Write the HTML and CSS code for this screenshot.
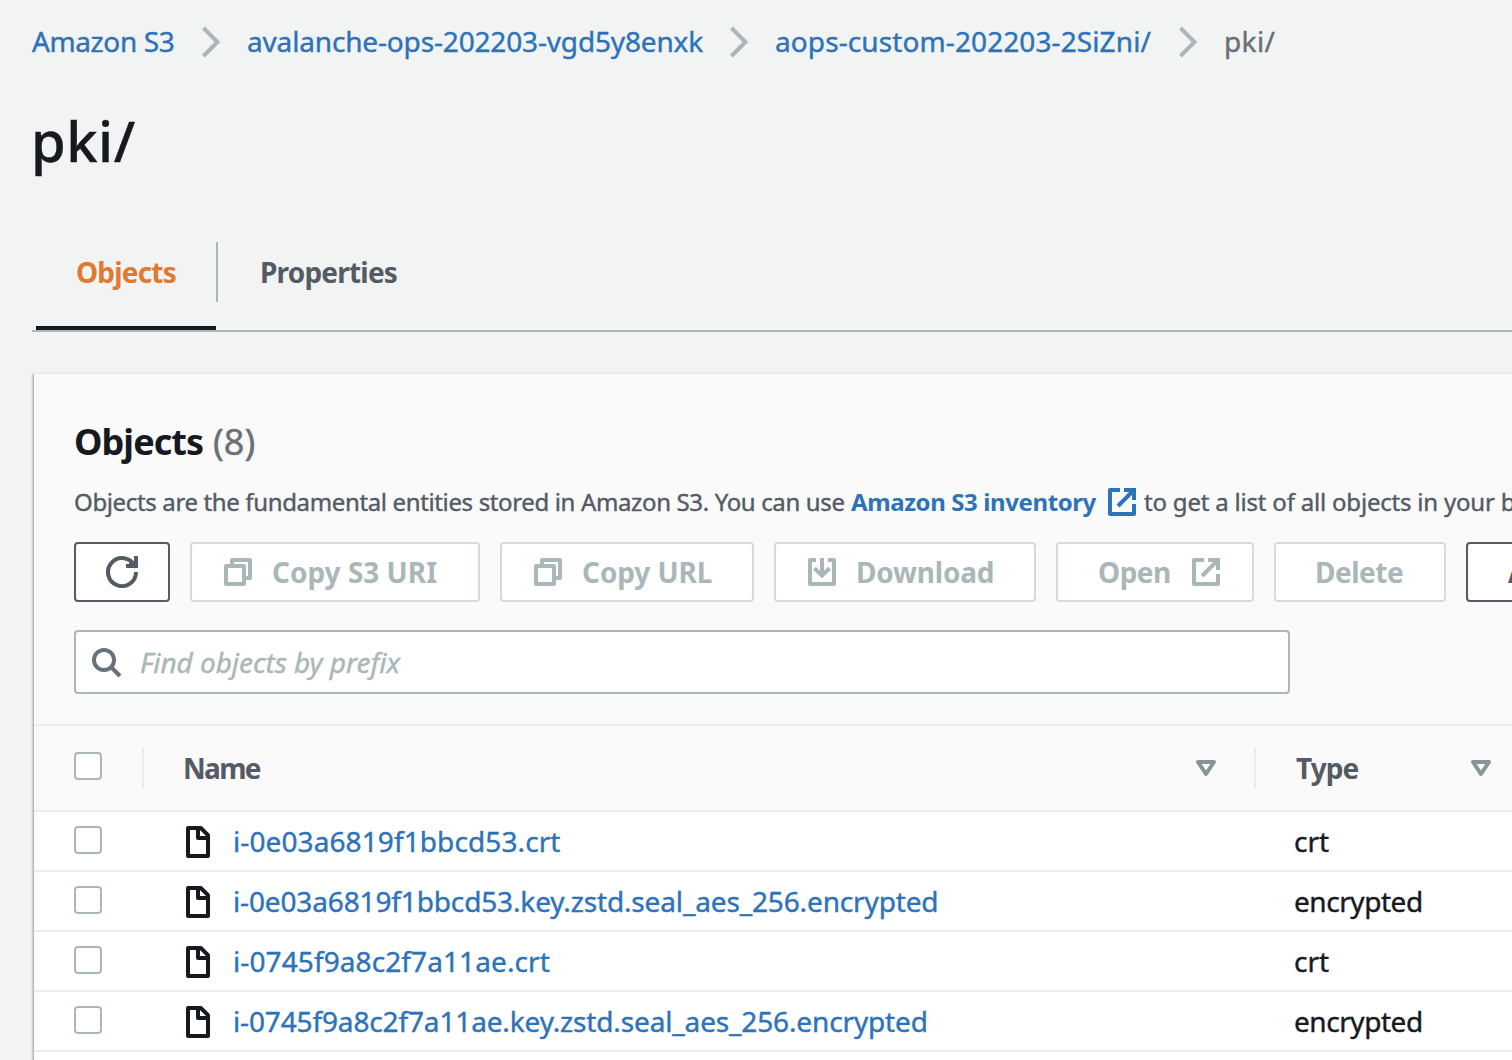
FILE: index.html
```html
<!DOCTYPE html>
<html lang="en">
<head>
<meta charset="utf-8">
<title>pki/ - Amazon S3</title>
<link rel="stylesheet" href="styles.css">
</head>
<body>
<svg class="sprite" aria-hidden="true">
  <symbol id="chevron" viewBox="0 0 20 32"><path d="M2.500 2l14 14-14 14"/></symbol>
  <symbol id="refresh" viewBox="0 0 16 16"><path d="M10 5h5V0M12 3l3 2.500"/><path d="M15 8a7 7 0 1 1-.7-3"/></symbol>
  <symbol id="copy" viewBox="0 0 16 16"><path class="round" d="M2 5h9v9H2z"/><path class="round" d="M5 5V2h9v9h-3"/></symbol>
  <symbol id="download" viewBox="0 0 16 16"><path class="round" d="M11 2h3v12H2V2h3"/><path d="M8 1v8.500M4.200 6.100L8 9.700l3.800-3.600"/></symbol>
  <symbol id="external" viewBox="0 0 16 16"><path d="M9 2h5v5M6 10l8-8"/><path class="round" d="M14 9v5H2V2h5"/></symbol>
  <symbol id="search" viewBox="0 0 16 16"><circle cx="7" cy="7" r="5"/><path d="M15 15l-4.500-4.500"/></symbol>
  <symbol id="file" viewBox="0 0 16 16"><path class="round" d="M3 1h6.400L13 4.600V15H3z"/><path class="round" d="M8 1v5h5"/></symbol>
  <symbol id="sort" viewBox="0 0 16 16"><path class="round" d="M4 5h8l-4 6z"/></symbol>
</svg>

<nav class="breadcrumbs">
  <a class="crumb crumb-root">Amazon S3</a>
  <svg class="chevron"><use href="#chevron"/></svg>
  <a class="crumb crumb-bucket">avalanche-ops-202203-vgd5y8enxk</a>
  <svg class="chevron"><use href="#chevron"/></svg>
  <a class="crumb crumb-folder">aops-custom-202203-2SiZni/</a>
  <svg class="chevron"><use href="#chevron"/></svg>
  <span class="crumb crumb-current">pki/</span>
</nav>

<h1 class="title">pki/</h1>

<div class="tabs">
  <div class="tab tab-active"><span class="tab-label">Objects</span></div>
  <div class="tab"><span class="tab-label">Properties</span></div>
</div>

<section class="card">
  <header class="card-header">
    <h2 class="heading"><span class="heading-text">Objects</span><span class="count">(8)</span></h2>
    <p class="description"><span class="desc-lead">Objects are the fundamental entities stored in Amazon S3. You can use</span><a class="inventory">Amazon S3 inventory</a><svg class="icon link-icon"><use href="#external"/></svg><span class="desc-tail">to get a list of all objects in your bucket.</span></p>
    <div class="actions">
      <button class="btn btn-enabled btn-refresh" aria-label="Refresh"><svg class="icon"><use href="#refresh"/></svg></button>
      <button class="btn btn-uri"><svg class="icon"><use href="#copy"/></svg><span>Copy S3 URI</span></button>
      <button class="btn btn-url"><svg class="icon"><use href="#copy"/></svg><span>Copy URL</span></button>
      <button class="btn btn-download"><svg class="icon"><use href="#download"/></svg><span>Download</span></button>
      <button class="btn btn-open"><span>Open</span><svg class="icon"><use href="#external"/></svg></button>
      <button class="btn btn-delete"><span>Delete</span></button>
      <button class="btn btn-enabled btn-actions"><span>Actions</span></button>
    </div>
    <div class="search">
      <svg class="icon"><use href="#search"/></svg>
      <span class="placeholder">Find objects by prefix</span>
    </div>
  </header>

  <div class="table">
    <div class="row row-head">
      <div class="cell cell-check"><span class="checkbox"></span></div>
      <div class="cell cell-name"><span class="label-name">Name</span><svg class="icon sort"><use href="#sort"/></svg></div>
      <div class="cell cell-type"><span class="label-type">Type</span><svg class="icon sort"><use href="#sort"/></svg></div>
    </div>
    <div class="row">
      <div class="cell cell-check"><span class="checkbox"></span></div>
      <div class="cell cell-name"><svg class="icon file"><use href="#file"/></svg><a class="short">i-0e03a6819f1bbcd53.crt</a></div>
      <div class="cell cell-type"><span>crt</span></div>
    </div>
    <div class="row">
      <div class="cell cell-check"><span class="checkbox"></span></div>
      <div class="cell cell-name"><svg class="icon file"><use href="#file"/></svg><a class="long">i-0e03a6819f1bbcd53.key.zstd.seal_aes_256.encrypted</a></div>
      <div class="cell cell-type"><span class="type-long">encrypted</span></div>
    </div>
    <div class="row">
      <div class="cell cell-check"><span class="checkbox"></span></div>
      <div class="cell cell-name"><svg class="icon file"><use href="#file"/></svg><a class="short">i-0745f9a8c2f7a11ae.crt</a></div>
      <div class="cell cell-type"><span>crt</span></div>
    </div>
    <div class="row">
      <div class="cell cell-check"><span class="checkbox"></span></div>
      <div class="cell cell-name"><svg class="icon file"><use href="#file"/></svg><a class="long">i-0745f9a8c2f7a11ae.key.zstd.seal_aes_256.encrypted</a></div>
      <div class="cell cell-type"><span class="type-long">encrypted</span></div>
    </div>
    <div class="row"></div>
  </div>
</section>
</body>
</html>
```
FILE: styles.css
```css
* { box-sizing: border-box; }

body {
  margin: 0;
  height: 1060px;
  overflow: hidden;
  padding: 21px 0 0 32px;
  background: #f2f4f3;
  color: #16191f;
  font: 28px/40px "Noto Sans", "Open Sans", sans-serif;
  -webkit-text-stroke: 0.4px currentColor;
  white-space: nowrap;
}

a { color: #2e73b8; }
svg { fill: none; stroke: currentColor; stroke-width: 2; flex: none; }
.sprite { display: none; }
.round { stroke-linejoin: round; }
.icon { width: 32px; height: 32px; display: block; }

.breadcrumbs { display: flex; height: 40px; }
.chevron {
  width: 20px;
  height: 32px;
  margin: 5px 27px 0 26px;
  color: #aab7b8;
  stroke-width: 4;
}
.crumb-root { width: 143px; letter-spacing: -0.4px; }
.crumb-bucket { width: 455px; letter-spacing: -0.16px; margin-left: -1px; margin-right: 1px; }
.crumb-folder { width: 376px; letter-spacing: 0.1px; margin-left: -1px; margin-right: 1px; }
.crumb-current { color: #687078; letter-spacing: 0.4px; margin-left: -1px; }

.title {
  margin: 44px 0 0 -1px;
  font-size: 56px;
  line-height: 70px;
  font-weight: 500;
  letter-spacing: 0.5px;
}

.tabs {
  display: flex;
  margin-top: 67px;
  height: 90px;
  padding-left: 4px;
  border-bottom: 2px solid #aab7b8;
  color: #545b64;
  font-weight: 700;
  -webkit-text-stroke: 0;
}
.tab { padding: 10px 40px 0 44px; letter-spacing: -0.8px; }
.tab-active {
  width: 180px;
  padding-left: 40px;
  border-bottom: 4px solid #16191f;
  color: #e07a31;
  position: relative;
}
.tab-active::after {
  content: "";
  position: absolute;
  left: 180px;
  top: 0;
  width: 2px;
  height: 60px;
  background: #aab7b8;
}

.card {
  margin: 40px 0 0 2px;
  height: 720px;
  border-top: 2px solid #eaeded;
  background: #fff;
  box-shadow: -2px 2px 2px 0 rgba(0, 28, 36, 0.2), 0 2px 2px 0 rgba(0, 28, 36, 0.3);
}
.card-header {
  height: 352px;
  padding: 43px 0 0 40px;
  border-bottom: 2px solid #eaeded;
  background: #fafafa;
}
.heading {
  display: flex;
  margin: 0;
  font-size: 36px;
  line-height: 50px;
}
.heading-text { width: 139px; letter-spacing: -0.94px; -webkit-text-stroke: 0; }
.count { color: #687078; font-weight: 400; }
.description {
  display: flex;
  margin: 18px 0 0;
  height: 34px;
  font-size: 24px;
  line-height: 34px;
  color: #545b64;
}
.description > * { flex: none; }
.desc-lead { width: 777px; letter-spacing: -0.36px; }
.inventory { width: 255px; font-weight: 700; letter-spacing: -0.4px; -webkit-text-stroke: 0; }
.link-icon { color: #2e73b8; margin-top: 1px; }
.desc-tail { margin-left: 6px; letter-spacing: -0.2px; }

.actions { display: flex; gap: 20px; margin-top: 23px; }
.btn {
  display: flex;
  align-items: center;
  flex: none;
  height: 60px;
  padding: 0 0 0 30px;
  border: 2px solid #d5dbdb;
  border-radius: 4px;
  background: #fff;
  color: #aab7b8;
  font: 700 28px/40px "Noto Sans", "Open Sans", sans-serif;
  -webkit-text-stroke: 0;
}
.btn .icon + span { margin-left: 18px; }
.btn-enabled { border-color: #545b64; color: #545b64; }
.btn-refresh { width: 96px; }
.btn-uri { width: 290px; }
.btn-url { width: 254px; letter-spacing: -0.1px; }
.btn-download { width: 262px; letter-spacing: -0.2px; }
.btn-open { width: 198px; padding-left: 40px; letter-spacing: -0.5px; }
.btn-open .icon { margin-left: 19px; }
.btn-delete { width: 172px; padding-left: 39px; letter-spacing: -0.48px; }
.btn-actions { width: 180px; padding-left: 40px; }

.search {
  display: flex;
  align-items: center;
  width: 1216px;
  height: 64px;
  margin-top: 28px;
  padding-left: 14px;
  border: 2px solid #aab7b8;
  border-radius: 4px;
  background: #fff;
  color: #687078;
}
.placeholder { margin-left: 18px; color: #aab7b8; font-style: italic; letter-spacing: -0.06px; }

.row {
  display: grid;
  grid-template-columns: 110px 1112px 1fr;
  height: 60px;
  border-bottom: 2px solid #eaeded;
}
.cell { display: flex; padding-left: 40px; }
.checkbox {
  width: 28px;
  height: 28px;
  margin-top: 14px;
  border: 2px solid #aab7b8;
  border-radius: 4px;
  background: #fff;
}
.row a, .row span:not(.checkbox) { padding-top: 9px; }
.cell-type { padding-left: 38px; }
.file { margin: 14px 19px 0 -2px; }
.short { letter-spacing: 0.1px; }
.long { letter-spacing: -0.14px; }
.type-long { letter-spacing: -0.45px; }

.row-head {
  height: 86px;
  background: #fafafa;
  color: #545b64;
  font-weight: 700;
  -webkit-text-stroke: 0;
}
.row-head .cell { align-items: center; }
.row-head .checkbox { margin-top: -4px; }
.row-head .cell-check, .row-head .cell-name {
  background: linear-gradient(#eaeded, #eaeded) right 21px / 2px 42px no-repeat;
}
.row-head .cell-name { padding-left: 39px; justify-content: space-between; padding-right: 34px; }
.row-head .cell-type { padding-left: 40px; justify-content: space-between; padding-right: 15px; }
.row-head span:not(.checkbox) { padding: 0; }
.label-name { letter-spacing: -1.7px; }
.label-type { letter-spacing: -0.9px; }
.sort { color: #879596; }
```
